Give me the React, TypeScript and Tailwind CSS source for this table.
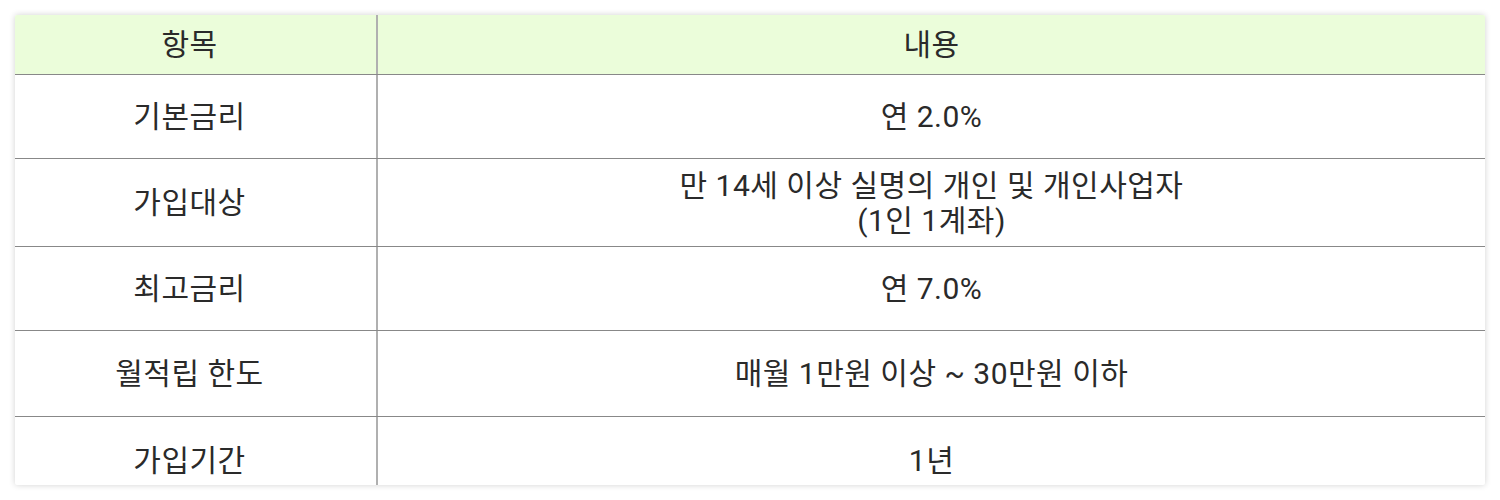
import React from "react";

const rows: { k: string; v: React.ReactNode; h: string }[] = [
  { k: "기본금리", v: "연 2.0%", h: "h-[84px]" },
  {
    k: "가입대상",
    v: (
      <>
        만 14세 이상 실명의 개인 및 개인사업자
        <br />
        (1인 1계좌)
      </>
    ),
    h: "h-[88px]",
  },
  { k: "최고금리", v: "연 7.0%", h: "h-[84px]" },
  { k: "월적립 한도", v: "매월 1만원 이상 ~ 30만원 이하", h: "h-[86px]" },
  { k: "가입기간", v: "1년", h: "h-[86px]" },
];

export default function App() {
  return (
    <div className="w-[1500px] h-[500px] bg-white p-[15px]" style={{ fontFamily: 'Roboto, "Noto Sans CJK KR", sans-serif' }}>
      <div className="h-[470px] overflow-hidden rounded-[2px] shadow-[0_0_6px_rgba(0,0,0,0.18)] bg-white text-[30px] leading-[35px] tracking-[0.5px] text-[#2a2a2a]">
        <div className="flex h-[60px] bg-[#ebfdda] border-b border-[#888]">
          <div className="w-[363px] pr-[12px] flex items-center justify-center border-r-2 border-[#b0b0b0]">항목</div>
          <div className="flex-1 flex items-center justify-center">내용</div>
        </div>
        {rows.map((r, i) => (
          <div key={i} className={`flex ${r.h} ${i < rows.length - 1 ? "border-b border-[#888]" : ""}`}>
            <div className="w-[363px] pr-[12px] flex items-center justify-center border-r-2 border-[#b0b0b0]">{r.k}</div>
            <div className="flex-1 flex items-center justify-center text-center">{r.v}</div>
          </div>
        ))}
      </div>
    </div>
  );
}
